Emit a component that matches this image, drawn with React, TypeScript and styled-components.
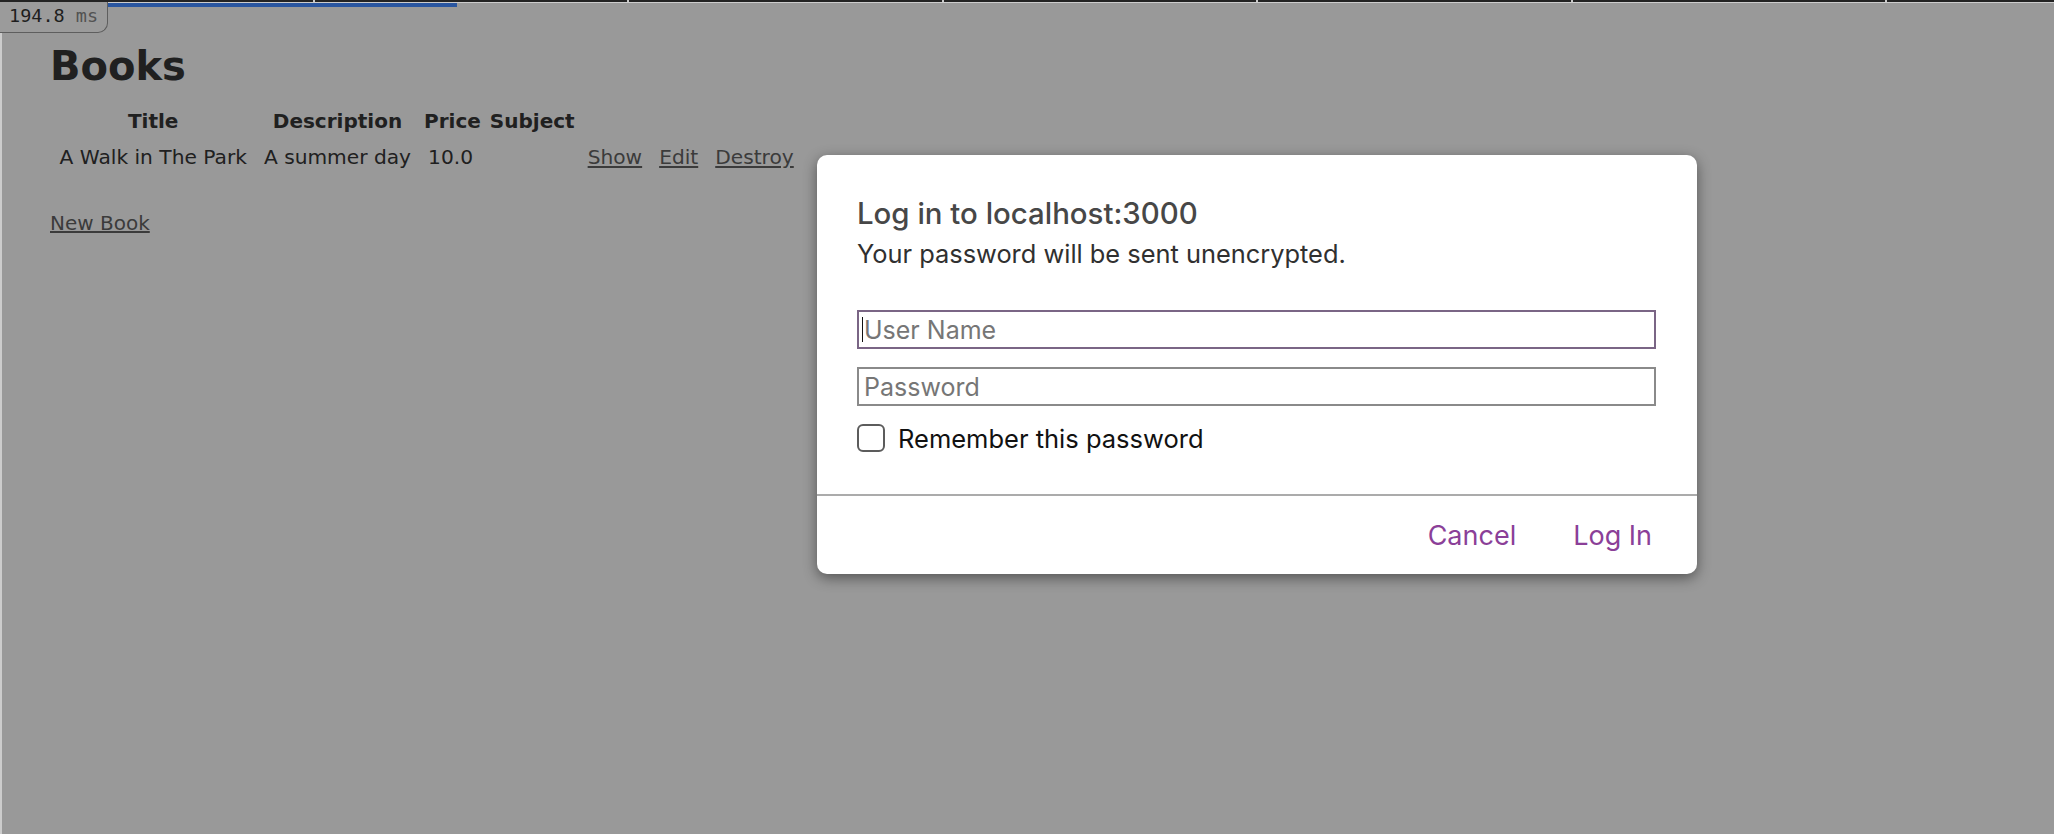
import React from 'react';
import styled, { createGlobalStyle } from 'styled-components';

const GlobalStyle = createGlobalStyle`
  html, body {
    margin: 0;
    padding: 0;
    background: #999999;
  }
  body {
    font-family: "DejaVu Sans", Verdana, sans-serif;
    color: #1f1f1f;
  }
`;

const books = [
  { title: 'A Walk in The Park', description: 'A summer day', price: '10.0', subject: '' },
];

export default function App() {
  return (
    <>
      <GlobalStyle />
      <Shell>
        <TopStrip>
          {Array.from({ length: 7 }).map((_, idx) => (
            <TopSegment key={idx} />
          ))}
        </TopStrip>
        <Rule />
        <ProgressTrack>
          <ProgressBar />
        </ProgressTrack>
        <Body>
          <LeftRail />
          <Content>
            <Heading>Books</Heading>
            <BookTable>
              <thead>
                <tr>
                  <Th>Title</Th>
                  <Th>Description</Th>
                  <Th>Price</Th>
                  <Th>Subject</Th>
                  <Th colSpan={3}></Th>
                </tr>
              </thead>
              <tbody>
                {books.map((book, idx) => (
                  <tr key={idx}>
                    <Td>{book.title}</Td>
                    <Td>{book.description}</Td>
                    <Td>{book.price}</Td>
                    <Td>{book.subject}</Td>
                    <Td><PageLink href="#">Show</PageLink></Td>
                    <Td><PageLink href="#">Edit</PageLink></Td>
                    <Td><PageLink href="#">Destroy</PageLink></Td>
                  </tr>
                ))}
              </tbody>
            </BookTable>
            <NewLink href="#">New Book</NewLink>
          </Content>
        </Body>
      </Shell>

      <TimingBadge>
        194.8 <Unit>ms</Unit>
      </TimingBadge>

      <Dialog>
        <DialogBody>
          <DialogTitle>Log in to localhost:3000</DialogTitle>
          <DialogText>Your password will be sent unencrypted.</DialogText>
          <Fields>
            <FieldWrap>
              <Field placeholder="User Name" $focused />
              <Caret />
            </FieldWrap>
            <Field placeholder="Password" type="password" />
            <CheckRow>
              <CheckBox />
              <CheckLabel>Remember this password</CheckLabel>
            </CheckRow>
          </Fields>
        </DialogBody>
        <DialogFooter>
          <FooterButton>Cancel</FooterButton>
          <FooterButton>Log In</FooterButton>
        </DialogFooter>
      </Dialog>
    </>
  );
}

const Shell = styled.div`
  display: flex;
  flex-direction: column;
  min-height: 834px;
  width: 2054px;
  overflow: hidden;
`;

const TopStrip = styled.div`
  display: flex;
  gap: 2px;
  height: 2px;
  background: #c9c9c9;
  overflow: hidden;
`;

const TopSegment = styled.div`
  flex: 0 0 312.5px;
  background: #232323;
`;

const Rule = styled.div`
  height: 1px;
  background: #cdcdcd;
`;

const ProgressTrack = styled.div`
  height: 4px;
  display: flex;
`;

const ProgressBar = styled.div`
  margin-left: 108px;
  width: 349px;
  background: #2a56a0;
`;

const Body = styled.div`
  flex: 1;
  display: flex;
`;

const LeftRail = styled.div`
  flex: 0 0 2px;
  background: #cccccc;
`;

const Content = styled.main`
  padding-left: 48px;
  display: flex;
  flex-direction: column;
  align-items: flex-start;
`;

const Heading = styled.h1`
  margin: 36px 0 13px;
  font-size: 40px;
  line-height: 46px;
  font-weight: bold;
  color: #202020;
`;

const BookTable = styled.table`
  border-spacing: 2px;
  font-size: 20px;
  line-height: 23px;
`;

const Th = styled.th`
  padding: 6px 3.5px 5px;
  font-weight: bold;
  text-align: center;
  color: #202020;
`;

const Td = styled.td`
  padding: 6px 7.5px;
  font-size: 20.2px;
  color: #202020;
`;

const PageLink = styled.a`
  color: #3b3b3b;
  text-decoration: underline;
`;

const NewLink = styled(PageLink)`
  margin-top: 35px;
  font-size: 20px;
  line-height: 23px;
`;

const TimingBadge = styled.div`
  position: fixed;
  top: 2px;
  left: 0;
  box-sizing: border-box;
  width: 108px;
  height: 31px;
  padding: 0 0 3px 9px;
  display: flex;
  align-items: center;
  font-family: "DejaVu Sans Mono", "Liberation Mono", monospace;
  font-size: 18.5px;
  color: #1e1e1e;
  background: #9b9b9b;
  border-right: 1px solid #5e5e5e;
  border-bottom: 1px solid #5e5e5e;
  border-bottom-right-radius: 10px;
  white-space: pre;
`;

const Unit = styled.span`
  color: #525252;
`;

const Dialog = styled.section`
  position: absolute;
  left: 817px;
  top: 155px;
  width: 880px;
  height: 419px;
  background: #ffffff;
  border-radius: 10px;
  box-shadow: 0 4px 14px rgba(0, 0, 0, 0.45);
  display: flex;
  flex-direction: column;
  font-family: Inter, "Noto Sans", sans-serif;
  overflow: hidden;
`;

const DialogBody = styled.div`
  padding: 41px 41px 42px 40px;
  border-bottom: 2px solid #ababab;
  display: flex;
  flex-direction: column;
`;

const DialogTitle = styled.h2`
  margin: 0;
  font-size: 29.4px;
  line-height: 36px;
  font-weight: 500;
  color: #474747;
`;

const DialogText = styled.p`
  margin: 6px 0 0;
  font-size: 25.4px;
  line-height: 31px;
  color: #303030;
`;

const Fields = styled.div`
  margin-top: 41px;
  display: flex;
  flex-direction: column;
  gap: 18px;
`;

const FieldWrap = styled.div`
  position: relative;
  display: flex;
`;

const Field = styled.input<{ $focused?: boolean }>`
  box-sizing: border-box;
  width: 100%;
  height: 39px;
  margin: 0;
  padding: 0 5px;
  border: 2px solid ${(p) => (p.$focused ? '#7a6585' : '#8a8a8a')};
  border-radius: 0;
  outline: none;
  font-family: Inter, "Noto Sans", sans-serif;
  font-size: 25px;
  color: #222;
  background: #fff;
  &::placeholder {
    color: #767676;
  }
`;

const Caret = styled.span`
  position: absolute;
  left: 5px;
  top: 7px;
  width: 1px;
  height: 25px;
  background: #111;
`;

const CheckRow = styled.label`
  display: flex;
  align-items: center;
  gap: 13px;
  height: 28px;
`;

const CheckBox = styled.span`
  box-sizing: border-box;
  width: 28px;
  height: 28px;
  border: 2px solid #5c5c5c;
  border-radius: 6px;
  background: #fff;
`;

const CheckLabel = styled.span`
  font-size: 25.5px;
  color: #111;
`;

const DialogFooter = styled.div`
  flex: 1;
  display: flex;
  justify-content: flex-end;
  align-items: center;
  gap: 57px;
  padding: 0 45px 0 0;
`;

const FooterButton = styled.button`
  border: none;
  background: none;
  padding: 0;
  font-family: Inter, "Noto Sans", sans-serif;
  font-size: 27px;
  color: #8b3f98;
  cursor: pointer;
`;
